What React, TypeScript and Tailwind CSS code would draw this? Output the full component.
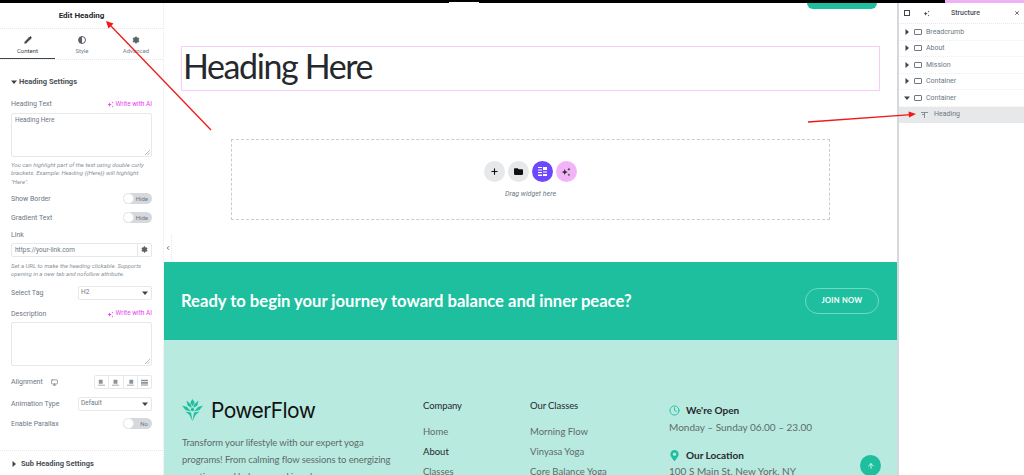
import { ArrowUp, ChevronLeft, Clock, Monitor, Pencil, Plus, Settings, X } from "lucide-react";
import { FaFolder, FaMapMarkerAlt } from "react-icons/fa";

const UI = "font-['Roboto',sans-serif]";
const SITE = "font-['Lato',sans-serif]";

function Caret({ open = false }: { open?: boolean }) {
  return (
    <svg width="6" height="6" viewBox="0 0 6 6" className="shrink-0 fill-[#3f444b]">
      {open ? <path d="M0 1.5h6L3 5z" /> : <path d="M1.5 0v6L5 3z" />}
    </svg>
  );
}

function Toggle({ label }: { label: string }) {
  return (
    <div className="relative flex h-[11px] w-[29px] items-center justify-end rounded-full bg-[#d5d8dc] pr-[4px]">
      <span className="absolute left-0 top-0 h-[11px] w-[11px] rounded-full border border-[#e6e8ea] bg-white" />
      <span className="text-[6px] text-[#6d7882]">{label}</span>
    </div>
  );
}

function SparkIcon({ className }: { className: string }) {
  return (
    <svg viewBox="0 0 12 12" className={className}>
      <path d="M4.5 2.5l1 2.6 2.6 1-2.6 1-1 2.6-1-2.6-2.6-1 2.6-1zM9.5 0.8l.5 1.4 1.4.5-1.4.5-.5 1.4-.5-1.4-1.4-.5 1.4-.5zM9.5 7.8l.5 1.2 1.2.5-1.2.5-.5 1.2-.5-1.2-1.2-.5 1.2-.5z" />
    </svg>
  );
}

function AiLink() {
  return (
    <span className="flex items-center gap-[2px] text-[6.5px] text-[#e73cf0]">
      <SparkIcon className="h-[7px] w-[7px] fill-[#e73cf0]" />
      Write with AI
    </span>
  );
}

function FieldRow({ label, children, className }: { label: string; children: React.ReactNode; className: string }) {
  return (
    <div className={`flex items-center justify-between ${className}`}>
      <span className="text-[7px] text-[#6d7882]">{label}</span>
      {children}
    </div>
  );
}

function SelectBox({ value }: { value: string }) {
  return (
    <div className="flex h-[14px] w-[74px] items-center justify-between rounded-[2px] border border-[#e6e8ea] pl-[2px] pr-[3px] text-[6.5px] text-[#6d7882]">
      {value}
      <Caret open />
    </div>
  );
}

function AlignIcon({ variant }: { variant: number }) {
  const paths = [
    "M1 1h5v5H1zM0 7.5h9v1H0z",
    "M2 1h5v5H2zM0 7.5h9v1H0z",
    "M3 1h5v5H3zM0 7.5h9v1H0z",
    "M0 1h9v2H0zM0 4h9v2H0zM0 7h9v1.5H0z",
  ];
  return (
    <svg width="7" height="7" viewBox="0 0 9 9" className="fill-[#8a929a]">
      <path d={paths[variant]} />
    </svg>
  );
}

function Grip() {
  return (
    <svg width="5" height="5" viewBox="0 0 5 5" className="absolute bottom-[1px] right-[1px] stroke-[#8a929a]">
      <path d="M0 5L5 0M2.5 5L5 2.5" strokeWidth="0.6" />
    </svg>
  );
}

function LeftPanel() {
  return (
    <aside className={`${UI} flex w-[164px] shrink-0 flex-col border-r border-dotted border-[#e6e8ea] bg-white`}>
      <div className="flex h-[26px] items-center justify-center border-b border-dotted border-[#e6e8ea] pt-[1px] text-[8px] font-bold text-[#26292c]">
        Edit Heading
      </div>
      <div className="flex h-[31px] border-b border-dotted border-[#e6e8ea]">
        <div className="flex w-[55px] flex-col items-center gap-[2px] border-b-[1.5px] border-[#3f444b] pt-[7px] text-[6px] text-[#3f444b]">
          <Pencil className="h-[8px] w-[8px] fill-[#3f444b]" />
          Content
        </div>
        <div className="flex w-[54px] flex-col items-center gap-[2px] pt-[7px] text-[6px] text-[#7a828b]">
          <span className="h-[8px] w-[8px] rounded-full border border-[#5a6068] bg-[linear-gradient(90deg,#5a6068_50%,#fff_50%)]" />
          Style
        </div>
        <div className="flex w-[54px] flex-col items-center gap-[2px] pt-[7px] text-[6px] text-[#7a828b]">
          <Settings className="h-[8px] w-[8px] fill-[#5a6068] text-[#5a6068]" />
          Advanced
        </div>
      </div>

      <div className="flex flex-col px-[11px]">
        <div className="mt-[16px] flex items-center gap-[2px] text-[7.5px] font-bold text-[#494f56]">
          <Caret open />
          Heading Settings
        </div>
        <div className="mt-[12px] flex items-center justify-between">
          <span className="text-[7px] text-[#6d7882]">Heading Text</span>
          <AiLink />
        </div>
        <div className="relative mt-[3px] h-[44px] rounded-[2px] border border-[#e6e8ea] px-[3px] py-[2px] text-[6.5px] text-[#6d7882]">
          Heading Here
          <Grip />
        </div>
        <p className="mt-[4px] text-[6px] italic leading-[8.5px] text-[#8a929a]">
          You can highlight part of the text using double curly brackets. Example: Heading {"{{Here}}"} will highlight "Here".
        </p>
        <FieldRow label="Show Border" className="mt-[7px]">
          <Toggle label="Hide" />
        </FieldRow>
        <FieldRow label="Gradient Text" className="mt-[8px]">
          <Toggle label="Hide" />
        </FieldRow>
        <span className="mt-[7px] text-[7px] text-[#6d7882]">Link</span>
        <div className="mt-[2px] flex h-[14px] rounded-[2px] border border-[#e6e8ea] text-[6.5px] text-[#6d7882]">
          <span className="flex-1 pl-[3px] leading-[12px]">https://your-link.com</span>
          <span className="flex w-[14px] items-center justify-center border-l border-[#e6e8ea]">
            <Settings className="h-[7px] w-[7px] fill-[#5a6068] text-[#5a6068]" />
          </span>
        </div>
        <p className="mt-[5px] text-[6px] italic leading-[8.5px] text-[#8a929a]">
          Set a URL to make the heading clickable. Supports opening in a new tab and nofollow attribute.
        </p>
        <FieldRow label="Select Tag" className="mt-[7px]">
          <SelectBox value="H2" />
        </FieldRow>
        <div className="mt-[9px] flex items-center justify-between">
          <span className="text-[7px] text-[#6d7882]">Description</span>
          <AiLink />
        </div>
        <div className="relative mt-[3px] h-[44px] rounded-[2px] border border-[#e6e8ea]">
          <Grip />
        </div>
        <div className="mt-[9px] flex items-center justify-between">
          <span className="flex items-center gap-[8px] text-[7px] text-[#6d7882]">
            Alignment
            <Monitor className="h-[7px] w-[7px] text-[#5a6068]" />
          </span>
          <div className="flex h-[14px] w-[58px] rounded-[2px] border border-[#e6e8ea]">
            {[0, 1, 2, 3].map((v) => (
              <span key={v} className="flex flex-1 items-center justify-center border-r border-[#e6e8ea] last:border-r-0">
                <AlignIcon variant={v} />
              </span>
            ))}
          </div>
        </div>
        <FieldRow label="Animation Type" className="mt-[8px]">
          <SelectBox value="Default" />
        </FieldRow>
        <FieldRow label="Enable Parallax" className="mt-[7px]">
          <Toggle label="No" />
        </FieldRow>
      </div>

      <div className="mt-[21px] flex items-center gap-[4px] border-t border-dotted border-[#e6e8ea] px-[11px] pt-[7px] text-[7.5px] font-bold text-[#494f56]">
        <Caret />
        Sub Heading Settings
      </div>
    </aside>
  );
}

function RoundButton({ className, children }: { className: string; children: React.ReactNode }) {
  return <span className={`flex h-[21px] w-[21px] items-center justify-center rounded-full ${className}`}>{children}</span>;
}

function Canvas() {
  return (
    <div className="flex h-[259px] flex-col bg-white">
      <div className={`${SITE} mx-[17px] mt-[43px] flex h-[45px] items-center border-[1.5px] border-[#f6ccf9] px-[1px] pb-[6px] text-[34px] leading-none tracking-[-1.4px] text-[#26292c]`}>
        Heading Here
      </div>
      <div className="mx-[67px] mt-[48px] flex h-[81px] flex-col items-center border border-dashed border-[#c9cdd1] pt-[21px]">
        <div className="-ml-[1px] flex gap-[3px]">
          <RoundButton className="bg-[#e6e8ea]">
            <Plus className="h-[9px] w-[9px] text-[#111]" strokeWidth={3} />
          </RoundButton>
          <RoundButton className="bg-[#e6e8ea]">
            <FaFolder className="h-[9px] w-[9px] text-[#111]" />
          </RoundButton>
          <RoundButton className="bg-[#6c47ff]">
            <svg width="11" height="11" viewBox="0 0 11 11" className="fill-white">
              <path d="M1 1h4v1H1zM6 1h4v3H6zM1 3.5h4v1H1zM1 6h4v1H1zM6 5.5h4v1H6zM1 8.5h4v1.5H1zM6 8h4v2H6z" />
            </svg>
          </RoundButton>
          <RoundButton className="bg-[#f3b4f7]">
            <SparkIcon className="h-[10px] w-[10px] fill-[#26292c]" />
          </RoundButton>
        </div>
        <span className={`${UI} mt-[7px] text-[7px] italic text-[#6d7882]`}>Drag widget here</span>
      </div>
    </div>
  );
}

function FooterColumn({ title, links, className }: { title: string; links: string[]; className: string }) {
  return (
    <div className={`flex shrink-0 flex-col ${className}`}>
      <span className="text-[9.5px] tracking-[-0.1px] text-[#26292c]">{title}</span>
      <div className="mt-[13px] flex flex-col gap-[9px]">
        {links.map((l) => (
          <span key={l} className={`text-[9.5px] leading-[11px] ${l === "About" ? "text-[#26292c]" : "text-[#5f6b69]"}`}>
            {l}
          </span>
        ))}
      </div>
    </div>
  );
}

function Site() {
  return (
    <div className={SITE}>
      <div className="flex h-[78px] items-center justify-between bg-[#1ebf9f] pl-[17px] pr-[18px]">
        <span className="text-[16.6px] font-bold text-white">Ready to begin your journey toward balance and inner peace?</span>
        <span className="flex h-[26px] w-[74px] items-center justify-center rounded-full border border-[#6fd9c3] text-[7.5px] font-bold tracking-[0.3px] text-white">
          JOIN NOW
        </span>
      </div>
      <div className="flex h-[135px] bg-[#b8eae0] pl-[18px] pt-[59px]">
        <div className="w-[241px] shrink-0">
          <div className="flex items-center gap-[8px]">
            <svg width="21" height="22" viewBox="0 0 21 22" className="fill-[#1ebf9f]">
              <path d="M10.5 0l2.2 3.5-2.2 4-2.2-4zM4.5 1.5l4.5 4 .6 3.5-4-2.5zM16.5 1.5l-4.5 4-.6 3.5 4-2.5zM0 6.5l5 1.5 4 4.5-5.5-1.5zM21 6.5l-5 1.5-4 4.5 5.5-1.5zM3.5 12.5l5.5 1 1.5 8.5-3-6zM17.5 12.5l-5.5 1-1.5 8.5 3-6z" />
              <circle cx="10.5" cy="10.5" r="1.7" />
            </svg>
            <span className="font-['Inter',sans-serif] text-[21px] leading-none tracking-[-0.6px] text-[#111]">PowerFlow</span>
          </div>
          <p className="mt-[13px] w-[220px] text-[9.5px] leading-[17px] tracking-[-0.1px] text-[#5f6b69]">
            Transform your lifestyle with our expert yoga programs! From calming flow sessions to energizing practices and balance-seeking classes
          </p>
        </div>
        <FooterColumn title="Company" links={["Home", "About", "Classes"]} className="w-[107px]" />
        <FooterColumn title="Our Classes" links={["Morning Flow", "Vinyasa Yoga", "Core Balance Yoga"]} className="w-[139px]" />
        <div className="mt-[5px] flex flex-col">
          <span className="flex h-[12px] items-center gap-[6px] text-[10px] font-bold text-[#26292c]">
            <Clock className="h-[11px] w-[11px] text-[#1ebf9f]" />
            We're Open
          </span>
          <span className="mt-[5px] h-[12px] whitespace-nowrap text-[10px] leading-[12px] text-[#5f6b69]">Monday – Sunday 06.00 – 23.00</span>
          <span className="mt-[16px] flex h-[12px] items-center gap-[6px] text-[10px] font-bold text-[#26292c]">
            <FaMapMarkerAlt className="h-[11px] w-[11px] text-[#1ebf9f]" />
            Our Location
          </span>
          <span className="mt-[4px] h-[12px] whitespace-nowrap text-[10px] leading-[12px] text-[#5f6b69]">100 S Main St, New York, NY</span>
        </div>
      </div>
    </div>
  );
}

function Structure() {
  const rows = ["Breadcrumb", "About", "Mission", "Container", "Container"];
  return (
    <aside className={`${UI} flex w-[127px] shrink-0 flex-col border-l-2 border-[#d5d8dc] bg-white`}>
      <div className="flex h-[21px] items-center border-b border-dotted border-[#e6e8ea] pl-[5px] pr-[4px]">
        <span className="h-[6px] w-[6px] border border-[#3f444b]" />
        <SparkIcon className="ml-[13px] h-[7px] w-[7px] fill-[#3f444b]" />
        <span className="flex-1 pl-[21px] text-[7px] font-medium text-[#494f56]">Structure</span>
        <X className="h-[6px] w-[6px] text-[#3f444b]" strokeWidth={3} />
      </div>
      {rows.map((r, i) => (
        <div key={i} className="flex h-[16.5px] items-center border-b border-dotted border-[#eceef0] pl-[5px] text-[7px] text-[#6d7882]">
          <Caret open={i === 4} />
          <span className="ml-[4px] mr-[4px] h-[6px] w-[8px] rounded-[1px] border border-[#6d7882]" />
          {r}
        </div>
      ))}
      <div className="flex h-[16px] items-center bg-[#e6e8ea] pl-[22px] text-[7px] text-[#6d7882]">
        <svg width="7" height="6" viewBox="0 0 7 6" className="mr-[6px] stroke-[#6d7882]">
          <path d="M0 .5h7M3.5.5V6M1 2.5h2" strokeWidth=".8" fill="none" />
        </svg>
        Heading
      </div>
    </aside>
  );
}

export default function App() {
  return (
    <div className="relative h-[475px] w-[1024px] overflow-hidden bg-white">
      <div className="flex h-[3px] bg-black">
        <span className="ml-[449px] mt-[2px] h-[1px] w-[30px] bg-white" />
        <span className="ml-auto h-[3px] w-[79px] bg-[#f0b0f5]" />
      </div>
      <div className="flex h-[472px]">
        <LeftPanel />
        <main className="relative min-w-0 flex-1">
          <Canvas />
          <Site />
          <span className="absolute left-0 top-[232px] flex h-[26px] w-[8px] items-center justify-center border-r border-dotted border-[#e6e8ea] bg-white">
            <ChevronLeft className="h-[6px] w-[6px] text-[#3f444b]" strokeWidth={3} />
          </span>
          <span className="absolute right-[20px] top-0 h-[6px] w-[70px] rounded-b-[8px] bg-[#1ebf9f]" />
          <span className="absolute bottom-[-1px] right-[16px] flex h-[21px] w-[21px] items-center justify-center rounded-full bg-[#1ebf9f]">
            <ArrowUp className="h-[8px] w-[8px] text-white" strokeWidth={2.5} />
          </span>
        </main>
        <Structure />
      </div>
      {/* red annotation arrows drawn over the shot */}
      <svg className="pointer-events-none absolute left-0 top-0" width="1024" height="475" viewBox="0 0 1024 475">
        <path d="M211 130L110 25" stroke="#f01818" strokeWidth="1.3" fill="none" />
        <path d="M106 21l7.5 2.5-5 5z" fill="#f01818" />
        <path d="M808 122L911 114.6" stroke="#f01818" strokeWidth="1.3" fill="none" />
        <path d="M916 114l-7 3.5-.4-6z" fill="#f01818" />
      </svg>
    </div>
  );
}
